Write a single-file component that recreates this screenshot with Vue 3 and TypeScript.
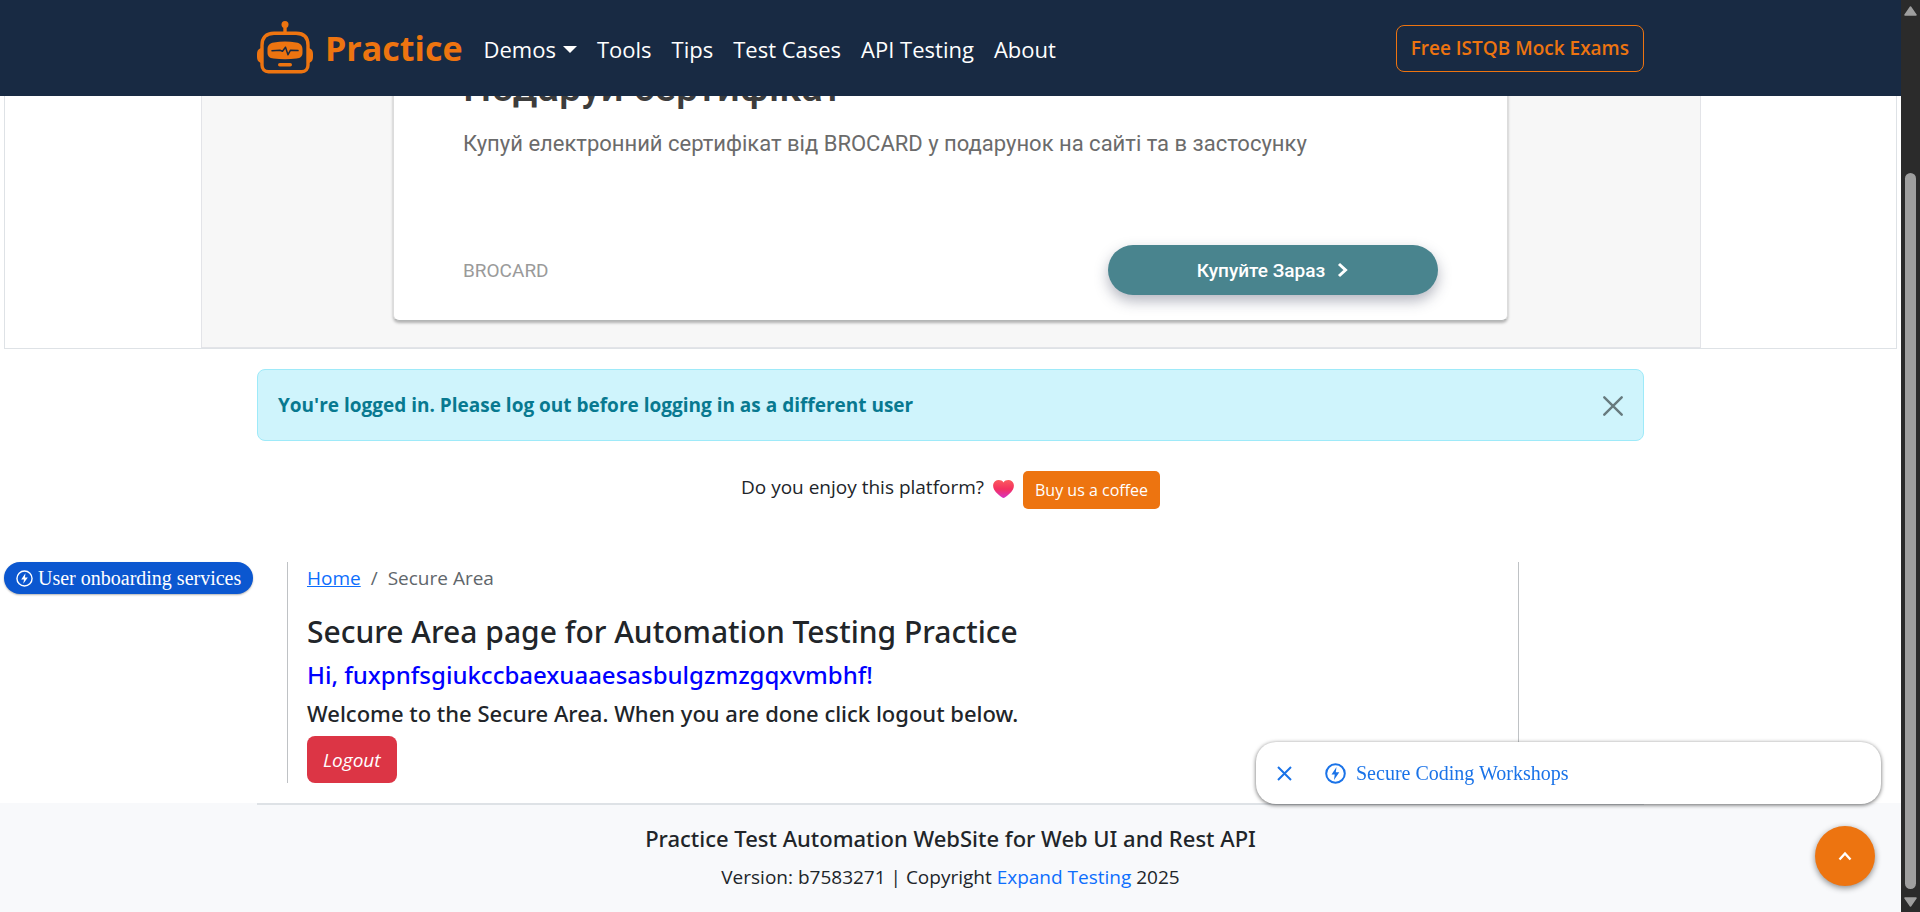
<script setup lang="ts">
import { ref } from 'vue'

interface NavItem {
  label: string
  dropdown?: boolean
}

const navItems: NavItem[] = [
  { label: 'Demos', dropdown: true },
  { label: 'Tools' },
  { label: 'Tips' },
  { label: 'Test Cases' },
  { label: 'API Testing' },
  { label: 'About' },
]

const username = 'fuxpnfsgiukccbaexuaaesasbulgzmzgqxvmbhf'
const showAlert = ref(true)
const showSuggestion = ref(true)
</script>

<template>
  <div class="page">
    <header class="topbar">
      <div class="container topbar-inner">
        <a class="brand" href="#">
          <svg class="brand-icon" viewBox="0 0 56 54" aria-hidden="true">
            <g fill="none" stroke="#ed7410" stroke-width="3.4">
              <path d="M28 6v6" />
              <path d="M17 12.2h22c8 0 12 4.500 12 12V44c0 4-2.500 6.800-6.500 6.800h-33C7.500 50.800 5 48 5 44V24.200c0-7.500 4-12 12-12z" />
            </g>
            <g fill="#ed7410">
              <circle cx="28" cy="3.600" r="3.500" />
              <path d="M4 27C1 28 0 30 0 33v3c0 3 1 5 4 6zM52 27c3 1 4 3 4 6v3c0 3-1 5-4 6z" />
              <path d="M17 21.500q11-2 22 0c4.500.600 6.500 3 6.500 7v3c0 4-2 5.500-6 6q-11.500 1.400-23 0c-4-.500-6-2-6-6v-3c0-4 2-6.400 6.500-7z" />
              <rect x="21" y="42" width="14" height="3.600" rx="1.800" />
            </g>
            <path d="M15 29.800l8-.600 2.500 1 3-4 2.500 7.500 2.500-4.500 7.500.400" fill="none" stroke="#182a43" stroke-width="1.500" stroke-linecap="round" stroke-linejoin="round" />
          </svg>
          <span>Practice</span>
        </a>
        <nav class="menu" aria-label="Main">
          <a v-for="item in navItems" :key="item.label" href="#" class="menu-link">
            {{ item.label }}<span v-if="item.dropdown" class="caret"></span>
          </a>
        </nav>
        <a class="exams" href="#">Free ISTQB Mock Exams</a>
      </div>
    </header>

    <section class="banner" aria-label="Advertisement">
      <div class="banner-inner">
        <div class="banner-card">
          <h2 class="banner-title">Подаруй сертифікат</h2>
          <p class="banner-text">Купуй електронний сертифікат від BROCARD у подарунок на сайті та в застосунку</p>
          <div class="banner-foot">
            <span class="banner-name">BROCARD</span>
            <a class="banner-cta" href="#">
              Купуйте Зараз
              <svg width="12" height="16" viewBox="0 0 12 16" aria-hidden="true">
                <path d="M2 2l6.500 6L2 14" fill="none" stroke="#fff" stroke-width="3" />
              </svg>
            </a>
          </div>
        </div>
      </div>
    </section>

    <div class="container">
      <div v-if="showAlert" class="alert" role="alert">
        <b>You're logged in. Please log out before logging in as a different user</b>
        <button class="alert-close" type="button" aria-label="Close" @click="showAlert = false">
          <svg width="20" height="20" viewBox="0 0 20 20" aria-hidden="true">
            <path d="M1.300 1.300l17.400 17.400M18.700 1.300L1.300 18.700" stroke="#677a7e" stroke-width="2.400" stroke-linecap="round" />
          </svg>
        </button>
      </div>

      <div class="support">
        <span>Do you enjoy this platform?</span>
        <svg class="heart" viewBox="0 0 21 18" aria-hidden="true">
          <defs>
            <linearGradient id="heart-fill" x1="0" y1="0" x2="0" y2="1">
              <stop offset="0" stop-color="#fb5a5e" />
              <stop offset="0.500" stop-color="#f4315f" />
              <stop offset="1" stop-color="#d733c4" />
            </linearGradient>
          </defs>
          <path d="M10.500 2.500C8.800-.200 4.500-.600 2.100 1.300-.400 3.300-.400 7 1.200 9.800c1.600 2.800 5.400 6 8 7.800q1.300.700 2.600 0c2.600-1.800 6.400-5 8-7.800 1.600-2.800 1.600-6.500-.900-8.500C16.500-.600 12.200-.200 10.500 2.500z" fill="url(#heart-fill)" />
        </svg>
        <a class="coffee" href="#">Buy us a coffee</a>
      </div>
    </div>

    <div class="container layout">
      <main class="content">
        <nav aria-label="Breadcrumb">
          <ol class="crumbs">
            <li><a href="#">Home</a></li>
            <li aria-hidden="true">/</li>
            <li aria-current="page">Secure Area</li>
          </ol>
        </nav>
        <h1>Secure Area page for Automation Testing Practice</h1>
        <h2 class="greeting">Hi, {{ username }}!</h2>
        <h3>Welcome to the Secure Area. When you are done click logout below.</h3>
        <a class="logout" href="#">Logout</a>
      </main>
    </div>

    <footer class="footer">
      <div class="container footer-inner">
        <h3>Practice Test Automation WebSite for Web UI and Rest API</h3>
        <p>Version: b7583271 | Copyright <a href="#">Expand Testing</a> 2025</p>
      </div>
    </footer>

    <a class="pill" href="#">
      <svg width="17" height="17" viewBox="0 0 18 18" aria-hidden="true">
        <circle cx="9" cy="9" r="8" fill="none" stroke="currentColor" stroke-width="1.500" />
        <path d="M10 3.500L5.500 10h3l-.800 4.500L12.500 8h-3z" fill="currentColor" />
      </svg>
      <span>User onboarding services</span>
    </a>

    <div v-if="showSuggestion" class="suggestion">
      <button type="button" aria-label="Dismiss" @click="showSuggestion = false">
        <svg width="15" height="15" viewBox="0 0 15 15" aria-hidden="true">
          <path d="M1 1l13 13M14 1L1 14" stroke="currentColor" stroke-width="2" />
        </svg>
      </button>
      <a href="#">
        <svg width="21" height="21" viewBox="0 0 21 21" aria-hidden="true">
          <circle cx="10.500" cy="10.500" r="9.300" fill="none" stroke="currentColor" stroke-width="2" />
          <path d="M11.500 4L6.500 11.500h3.200L9 17l5.300-7.800h-3.500z" fill="currentColor" />
        </svg>
        <span>Secure Coding Workshops</span>
      </a>
    </div>

    <button class="to-top" type="button" aria-label="Back to top">
      <svg width="14" height="10" viewBox="0 0 14 10" aria-hidden="true">
        <path d="M1.500 8.500L7 2.500l5.500 6" fill="none" stroke="#fff" stroke-width="2.400" />
      </svg>
    </button>

    <div class="scrollbar" aria-hidden="true">
      <svg width="13" height="10" viewBox="0 0 13 10"><path d="M6.500 1L12 9H1z" fill="#9f9f9f" stroke="#9f9f9f" stroke-width="1.500" stroke-linejoin="round" /></svg>
      <div class="track"><div class="thumb"></div></div>
      <svg width="13" height="10" viewBox="0 0 13 10"><path d="M6.500 9L12 1H1z" fill="#9f9f9f" stroke="#9f9f9f" stroke-width="1.500" stroke-linejoin="round" /></svg>
    </div>
  </div>
</template>

<style>
body {
  margin: 0;
  background: #fff;
}
</style>

<style scoped>
.page {
  display: flex;
  flex-direction: column;
  min-height: 100vh;
  padding-right: 19px;
  box-sizing: border-box;
  background: #fff;
  color: #212529;
  font-family: "Open Sans", "Noto Sans", sans-serif;
  font-size: 19px;
  line-height: 33px;
}
.page *,
.page *::before {
  box-sizing: border-box;
}
h1,
h2,
h3,
p {
  margin: 0;
}
button {
  padding: 0;
  border: 0;
  background: none;
  cursor: pointer;
}
svg {
  display: block;
  flex: none;
}
.container {
  width: 100%;
  max-width: 1387px;
  margin: 0 auto;
}

/* Top bar */
.topbar {
  position: relative;
  z-index: 1;
  background: #182a43;
}
.topbar-inner {
  display: flex;
  align-items: center;
  height: 96px;
}
.brand {
  display: flex;
  align-items: center;
  gap: 12px;
  margin-right: 11px;
  color: #ed7410;
  font-size: 34px;
  font-weight: 700;
  line-height: 52px;
  text-decoration: none;
}
.brand-icon {
  width: 56px;
  height: 54px;
}
.menu {
  display: flex;
}
.menu-link {
  display: flex;
  align-items: center;
  padding: 2px 10px 0;
  color: #fff;
  font-size: 22px;
  line-height: 32px;
  text-decoration: none;
}
.caret {
  margin-left: 7px;
  border: 7px solid transparent;
  border-top-color: #fff;
  border-bottom: 0;
}
.exams {
  margin-left: auto;
  padding: 6px 14px;
  border: 1px solid #ed7410;
  border-radius: 8px;
  color: #ed7410;
  font-weight: 600;
  text-decoration: none;
}

/* Banner */
.banner {
  display: flex;
  justify-content: center;
  align-items: flex-end;
  height: 253px;
  margin: 0 4px 20px;
  border: 1px solid #dee2e6;
  border-top: 0;
}
.banner-inner {
  display: flex;
  justify-content: center;
  width: 1500px;
  padding-bottom: 26px;
  border: 1px solid #e3e4e8;
  background: #f7f7f7;
}
.banner-card {
  width: 1115px;
  padding: 24px 69px 25px;
  border: 1px solid #dcdcdc;
  border-bottom-color: #b4b6b6;
  border-radius: 6px;
  background: #fff;
  box-shadow: 0 2px 3px rgba(0, 0, 0, 0.28);
  font-family: Roboto, "Noto Sans", sans-serif;
}
.banner-title {
  margin-bottom: 16px;
  color: #3c3c3c;
  font-size: 40px;
  font-weight: 500;
  line-height: 48px;
}
.banner-text {
  margin-bottom: 85px;
  color: #6b6b6b;
  font-size: 22px;
  line-height: 32px;
}
.banner-foot {
  display: flex;
  align-items: center;
  justify-content: space-between;
}
.banner-name {
  color: #9a9a9a;
}
.banner-cta {
  display: flex;
  align-items: center;
  justify-content: center;
  gap: 12px;
  width: 330px;
  height: 50px;
  border-radius: 25px;
  background: #49848e;
  box-shadow: 0 6px 14px rgba(40, 45, 75, 0.35);
  color: #fff;
  font-weight: 500;
  text-decoration: none;
}

/* Alert and support row */
.alert {
  display: flex;
  align-items: center;
  justify-content: space-between;
  padding: 19px 20px 18px;
  margin-bottom: 30px;
  border: 1px solid #9eeaf9;
  border-radius: 8px;
  background: #cff4fc;
  color: #087990;
}
.support {
  display: flex;
  align-items: flex-start;
  justify-content: center;
  gap: 9px;
  margin-bottom: 53px;
}
.heart {
  width: 21px;
  height: 18px;
  margin-top: 9px;
}
.coffee {
  padding: 0 12px;
  border-radius: 5px;
  background: #ed7410;
  color: #fff;
  font-size: 16px;
  line-height: 38px;
  text-decoration: none;
}

/* Main content */
.layout {
  padding: 0 125px 20px 30px;
}
.content {
  padding: 0 19px;
  border: solid #bfc2c5;
  border-width: 0 1px;
}
.crumbs {
  display: flex;
  gap: 10px;
  margin: 0 0 18px;
  padding: 0;
  list-style: none;
  color: #60666b;
}
.crumbs a {
  color: #0d6efd;
}
h1,
.greeting,
h3 {
  margin-bottom: 10px;
  font-family: "Noto Sans", "Open Sans", sans-serif;
  font-weight: 500;
}
h1 {
  font-size: 30px;
  line-height: 37px;
}
.greeting {
  color: #00f;
  font-size: 24px;
  line-height: 30px;
}
h3 {
  font-size: 22px;
  line-height: 26px;
}
.logout {
  display: block;
  width: fit-content;
  padding: 8px 16px 6px;
  border-radius: 8px;
  background: #dc3545;
  color: #fff;
  font-style: italic;
  text-decoration: none;
}

/* Footer */
.footer {
  flex: 1;
  background: #f8f9fb;
}
.footer-inner {
  padding: 20px 0 16px;
  border-top: 2px solid #dee2e6;
  text-align: center;
}
.footer a {
  color: #0d6efd;
  text-decoration: none;
}

/* Floating items */
.pill {
  position: absolute;
  top: 562px;
  left: 4px;
  display: flex;
  align-items: center;
  gap: 5px;
  padding: 0 12px;
  border-radius: 16px;
  background: #0b57d0;
  box-shadow: 0 1px 2px rgba(0, 0, 0, 0.3);
  color: #fff;
  font-family: "Liberation Serif", serif;
  font-size: 20px;
  line-height: 32px;
  text-decoration: none;
}
.suggestion {
  position: fixed;
  right: 39px;
  bottom: 108px;
  display: flex;
  align-items: center;
  gap: 33px;
  width: 625px;
  height: 62px;
  padding: 0 21px;
  border-radius: 20px;
  background: #fff;
  box-shadow: 0 1px 4px rgba(0, 0, 0, 0.6);
  color: #1a73e8;
  font-family: "Liberation Serif", serif;
  font-size: 20px;
  line-height: 24px;
}
.suggestion button {
  color: #1a73e8;
}
.suggestion a {
  display: flex;
  align-items: center;
  gap: 10px;
  color: #1a73e8;
  text-decoration: none;
}
.to-top {
  position: fixed;
  right: 45px;
  bottom: 26px;
  display: flex;
  align-items: center;
  justify-content: center;
  width: 60px;
  height: 60px;
  border-radius: 50%;
  background: #ed7410;
  box-shadow: 0 2px 6px rgba(0, 0, 0, 0.45);
}
.scrollbar {
  position: fixed;
  top: 0;
  right: 0;
  bottom: 0;
  z-index: 2;
  display: flex;
  flex-direction: column;
  align-items: center;
  width: 19px;
  padding: 6px 0 5px;
  background: #2b2b2b;
}
.track {
  display: flex;
  flex: 1;
  align-items: flex-end;
  padding-bottom: 8px;
}
.thumb {
  width: 11px;
  height: 82%;
  border-radius: 6px;
  background: #9f9f9f;
}
</style>
